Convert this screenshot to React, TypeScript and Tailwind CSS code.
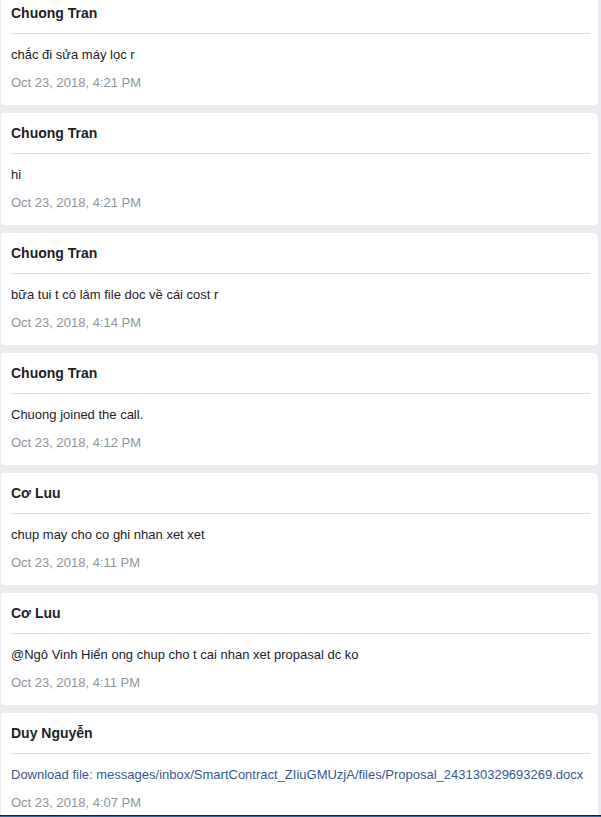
type Message = {
  author: string
  text: string
  time: string
  link?: boolean
}

const MESSAGES: Message[] = [
  { author: 'Chuong Tran', text: 'chắc đi sửa máy lọc r', time: 'Oct 23, 2018, 4:21 PM' },
  { author: 'Chuong Tran', text: 'hi', time: 'Oct 23, 2018, 4:21 PM' },
  { author: 'Chuong Tran', text: 'bữa tui t có làm file doc về cái cost r', time: 'Oct 23, 2018, 4:14 PM' },
  { author: 'Chuong Tran', text: 'Chuong joined the call.', time: 'Oct 23, 2018, 4:12 PM' },
  { author: 'Cơ Luu', text: 'chup may cho co ghi nhan xet xet', time: 'Oct 23, 2018, 4:11 PM' },
  { author: 'Cơ Luu', text: '@Ngô Vinh Hiển ong chup cho t cai nhan xet propasal dc ko', time: 'Oct 23, 2018, 4:11 PM' },
  {
    author: 'Duy Nguyễn',
    text: 'Download file: messages/inbox/SmartContract_ZIiuGMUzjA/files/Proposal_243130329693269.docx',
    time: 'Oct 23, 2018, 4:07 PM',
    link: true,
  },
]

export default function App() {
  return (
    <div className="relative h-[817px] w-[601px] overflow-hidden bg-[#e9ebee] font-['Liberation_Sans',Arial,sans-serif]">
      <div className="mt-[-7px] flex flex-col gap-[8px] pl-[1px] pr-[3px]">
        {MESSAGES.map((m, i) => (
          <div key={i} className="h-[112px] rounded-[4px] bg-white pl-[10px] pr-[8px]">
            <div className="flex h-[41px] items-center border-b border-[#dddfe2] text-[14px] font-bold text-[#1d2129]">
              {m.author}
            </div>
            <div className="flex h-[41px] items-center pt-[1px] text-[13px]">
              {m.link ? (
                <a className="whitespace-nowrap text-[#385898]">{m.text}</a>
              ) : (
                <span className="text-[#1d2129]">{m.text}</span>
              )}
            </div>
            <div className="text-[13px] leading-[16px] text-[#90949c]">{m.time}</div>
          </div>
        ))}
      </div>
      <div className="absolute bottom-0 left-0 right-0">
        <div className="h-[1px] bg-[#16212c]" />
        <div className="h-[1px] bg-[#2e6aa6]" />
      </div>
    </div>
  )
}
